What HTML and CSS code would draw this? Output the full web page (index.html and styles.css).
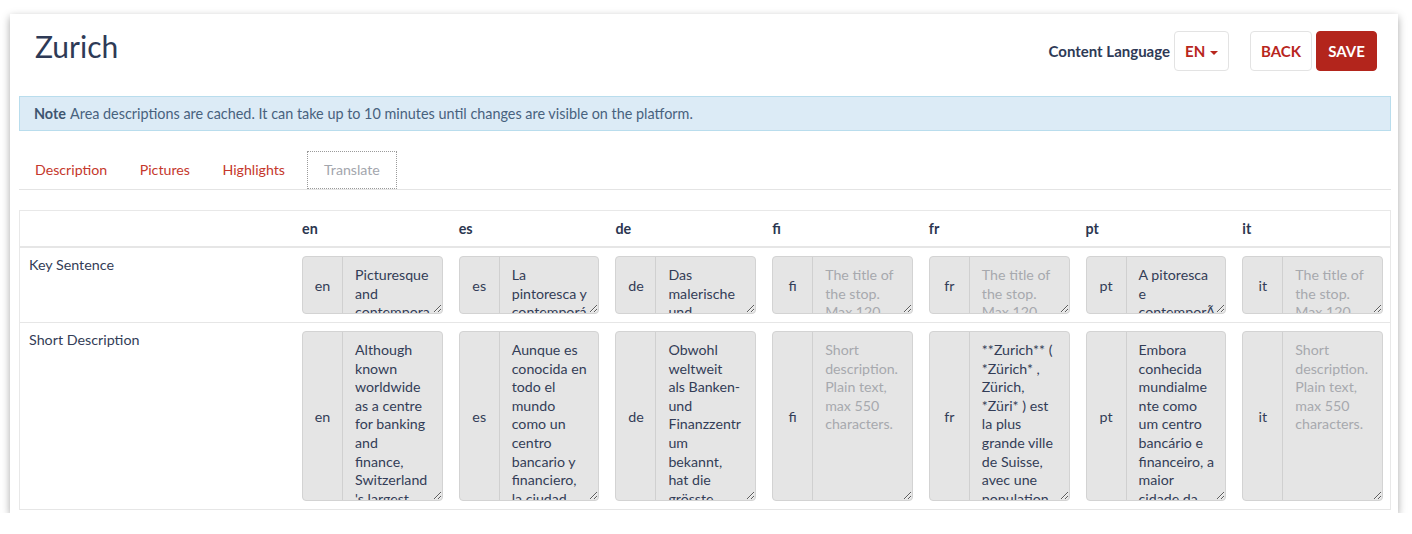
FILE: index.html
```html
<!DOCTYPE html>
<html lang="en">

<head>
    <meta charset="UTF-8">
    <meta name="viewport" content="width=device-width, initial-scale=1.0">
    <title>Zurich</title>
    <link rel="stylesheet" href="styles.css">
</head>

<body>
    <div class="area-card">
        <div class="area-head">
            <h1 class="area-title">Zurich</h1>
            <div class="area-actions">
                <span class="lang-label">Content Language</span>
                <button class="btn btn-lang">EN <span class="caret"></span></button>
                <button class="btn btn-back">BACK</button>
                <button class="btn btn-save">SAVE</button>
            </div>
        </div>

        <div class="note"><b>Note</b> Area descriptions are cached. It can take up to 10 minutes until changes are visible on the platform.</div>

        <ul class="tabs">
            <li><a href="#">Description</a></li>
            <li><a href="#">Pictures</a></li>
            <li><a href="#">Highlights</a></li>
            <li class="active"><a href="#">Translate</a></li>
        </ul>

        <div class="translate">
            <div class="tr tr-head">
                <div class="td"></div>
                <div class="td">en</div>
                <div class="td">es</div>
                <div class="td">de</div>
                <div class="td">fi</div>
                <div class="td">fr</div>
                <div class="td">pt</div>
                <div class="td">it</div>
            </div>

            <div class="tr row-key">
                <div class="td label">Key Sentence</div>
                <div class="td"><div class="field"><span class="addon">en</span><textarea readonly>Picturesque
and
contempora
ry Zurich</textarea></div></div>
                <div class="td"><div class="field"><span class="addon">es</span><textarea readonly>La
pintoresca y
contemporá
nea Zúrich</textarea></div></div>
                <div class="td"><div class="field"><span class="addon">de</span><textarea readonly>Das
malerische
und
moderne</textarea></div></div>
                <div class="td"><div class="field"><span class="addon">fi</span><textarea readonly placeholder="The title of&#10;the stop.&#10;Max 120&#10;characters."></textarea></div></div>
                <div class="td"><div class="field"><span class="addon">fr</span><textarea readonly placeholder="The title of&#10;the stop.&#10;Max 120&#10;characters."></textarea></div></div>
                <div class="td"><div class="field"><span class="addon">pt</span><textarea readonly>A pitoresca
e
contemporÃ
¢nea</textarea></div></div>
                <div class="td"><div class="field"><span class="addon">it</span><textarea readonly placeholder="The title of&#10;the stop.&#10;Max 120&#10;characters."></textarea></div></div>
            </div>

            <div class="tr row-short">
                <div class="td label">Short Description</div>
                <div class="td"><div class="field"><span class="addon">en</span><textarea readonly>Although
known
worldwide
as a centre
for banking
and
finance,
Switzerland
's largest
city</textarea></div></div>
                <div class="td"><div class="field"><span class="addon">es</span><textarea readonly>Aunque es
conocida en
todo el
mundo
como un
centro
bancario y
financiero,
la ciudad
más</textarea></div></div>
                <div class="td"><div class="field"><span class="addon">de</span><textarea readonly>Obwohl
weltweit
als Banken-
und
Finanzzentr
um
bekannt,
hat die
grösste
Stadt</textarea></div></div>
                <div class="td"><div class="field"><span class="addon">fi</span><textarea readonly placeholder="Short&#10;description.&#10;Plain text,&#10;max 550&#10;characters."></textarea></div></div>
                <div class="td"><div class="field"><span class="addon">fr</span><textarea readonly>**Zurich** (
*Zürich* ,
Zürich,
*Züri* ) est
la plus
grande ville
de Suisse,
avec une
population
de</textarea></div></div>
                <div class="td"><div class="field"><span class="addon">pt</span><textarea readonly>Embora
conhecida
mundialme
nte como
um centro
bancário e
financeiro, a
maior
cidade da
Suíça</textarea></div></div>
                <div class="td"><div class="field"><span class="addon">it</span><textarea readonly placeholder="Short&#10;description.&#10;Plain text,&#10;max 550&#10;characters."></textarea></div></div>
            </div>
        </div>
    </div>
</body>

</html>
```

FILE: styles.css
```css
* {
    box-sizing: border-box;
}

body {
    margin: 0;
    background: #fff;
    font-family: "Lato", "Open Sans", sans-serif;
    font-size: 14.3px;
    color: #333d57;
}

.area-card {
    width: 1388px;
    height: 499px;
    margin: 14px 0 0 10px;
    padding: 17px 7px 0 9px;
    background: #fff;
    box-shadow: 0 3px 8px rgba(0, 0, 0, 0.35);
    overflow: hidden;
}

/* header */
.area-head {
    display: flex;
    justify-content: space-between;
    align-items: center;
    height: 40px;
    padding: 0 14px 0 16px;
}

.area-title {
    margin: -10px 0 0;
    font-size: 30px;
    font-weight: 400;
    color: #2e3a56;
}

.area-actions {
    display: flex;
    align-items: center;
}

.lang-label {
    font-size: 15px;
    font-weight: 700;
    color: #2e3a56;
    margin-right: 4px;
}

.btn {
    height: 40px;
    border: 1px solid #e3e3e3;
    border-radius: 4px;
    background: #fff;
    font-family: inherit;
    font-size: 15px;
    font-weight: 700;
    color: #b8261d;
    padding: 0;
    white-space: nowrap;
}

.btn-lang {
    width: 55px;
    margin-right: 21px;
}

.caret {
    display: inline-block;
    vertical-align: middle;
    margin-left: 1px;
    border-top: 4px solid #b8261d;
    border-left: 4px solid transparent;
    border-right: 4px solid transparent;
}

.btn-back {
    width: 62px;
    margin-right: 4px;
}

.btn-save {
    width: 61px;
    background: #b3251c;
    border-color: #b3251c;
    color: #fff;
}

/* note */
.note {
    margin-top: 25px;
    height: 35px;
    padding: 0 14px;
    display: flex;
    align-items: center;
    gap: 4px;
    background: #dcebf6;
    border: 1px solid #b9dded;
    color: #48627e;
    font-size: 14.4px;
}

.note b {
    color: #3e5670;
}

/* tabs */
.tabs {
    list-style: none;
    margin: 20px 0 0;
    padding: 0;
    display: flex;
    border-bottom: 1px solid #e4e4e4;
}

.tabs li a {
    display: block;
    height: 38px;
    line-height: 38px;
    padding: 0 16.5px 0 16px;
    font-size: 14.2px;
    color: #c5382c;
    text-decoration: none;
}

.tabs li.active a {
    color: #a3a6ad;
    outline: 1px dotted #9a9a9a;
    outline-offset: -1px;
    padding: 0 17.5px;
    margin-left: 5px;
}

/* translate table */
.translate {
    margin-top: 20px;
    border-top: 1px solid #e8e8e8;
    border-left: 1px solid #e8e8e8;
    border-right: 1px solid #e8e8e8;
}

.tr {
    display: grid;
    grid-template-columns: 273px repeat(7, minmax(0, 1fr));
    border-bottom: 1px solid #e6e6e6;
}

.tr-head {
    height: 37px;
    border-bottom-width: 2px;
    font-weight: 700;
    color: #2b3650;
}

.tr-head .td {
    padding: 9px 9px 0;
}

.td {
    padding: 8px 7px 8px 9px;
    min-width: 0;
}

.td.label {
    padding-top: 8px;
    color: #333d57;
}

.field {
    display: flex;
    border: 1px solid #d3d3d3;
    border-radius: 4px;
    background: #e5e5e5;
    overflow: hidden;
}

.row-key .field {
    height: 58px;
}

.row-short .field {
    height: 170px;
}

.addon {
    width: 40px;
    flex: none;
    display: flex;
    align-items: center;
    justify-content: center;
    border-right: 1px solid #d0d0d0;
    color: #333d57;
}

.field textarea {
    flex: 1;
    width: 0;
    min-width: 0;
    border: 0;
    margin: 0;
    padding: 9px 4px 0 12px;
    background: transparent;
    font-family: inherit;
    font-size: 14.2px;
    line-height: 18.6px;
    color: #333d57;
    overflow: hidden;
    outline: none;
}

.field textarea::placeholder {
    color: #a7a9ae;
}
```
